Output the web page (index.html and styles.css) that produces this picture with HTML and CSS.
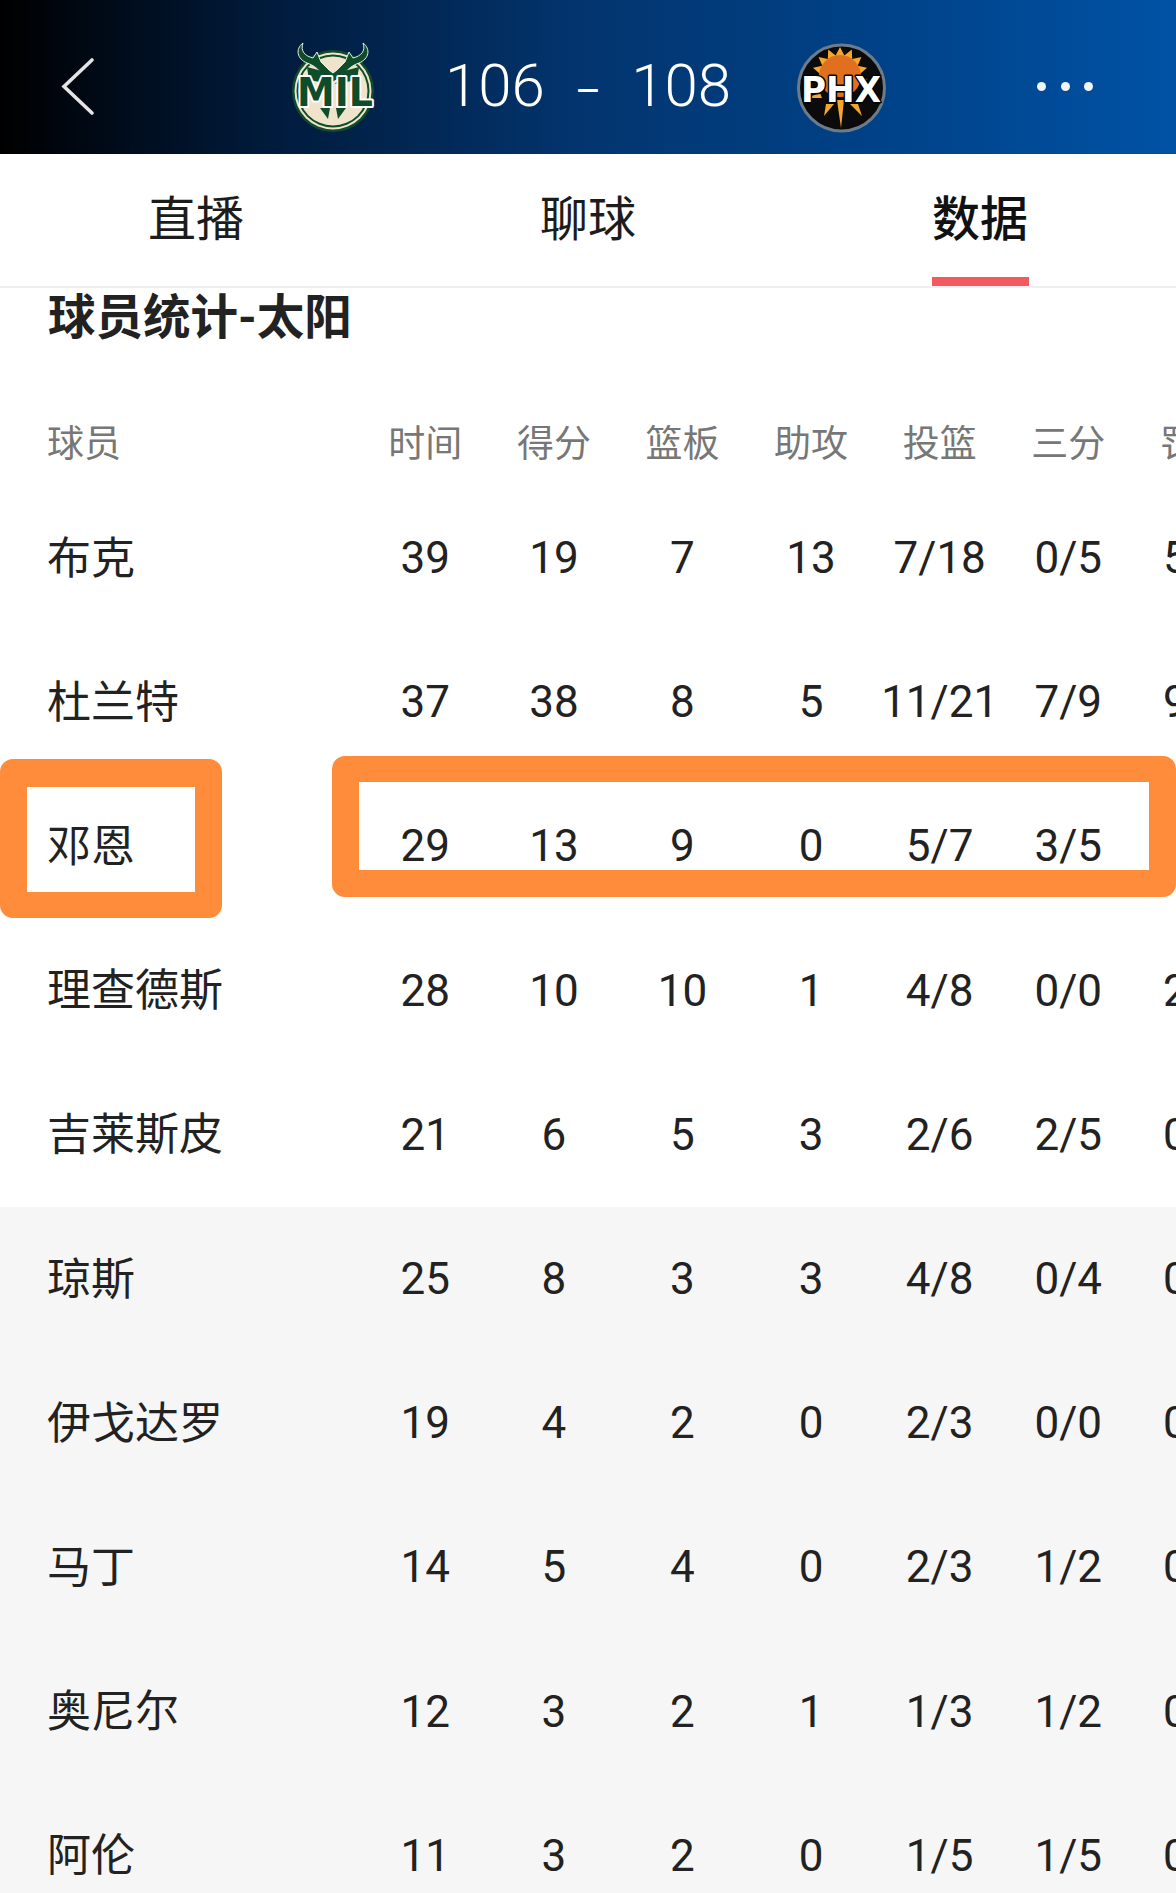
FILE: index.html
```html
<!DOCTYPE html>
<html lang="zh-CN">
<head>
<meta charset="utf-8">
<title>球员统计</title>
<link rel="stylesheet" href="styles.css">
</head>
<body>
<div class="stage">
  <header class="scorebar">
    <svg class="back" viewBox="0 0 40 64" aria-hidden="true"><path d="M32 6 L4 32.5 L32 59" fill="none" stroke="#e4e4e4" stroke-width="3.6" stroke-linecap="round" stroke-linejoin="miter"/></svg>
    <svg class="logo" viewBox="0 0 90 96" aria-hidden="true">
      <circle cx="44" cy="51" r="41" fill="#0f4d2a"/>
      <circle cx="44" cy="51" r="38.5" fill="#efe3cb"/>
      <circle cx="44" cy="51" r="36.5" fill="#0f4d2a"/>
      <circle cx="44" cy="51" r="34.5" fill="#efe3cb"/>
      <path d="M14 3 C6 9 8 19 18 23 C24 25 30 29 34 36 L44 42 L54 36 C58 29 64 25 70 23 C80 19 82 9 74 3 C77 11 72 16 64 18 L60 12 L56 22 L48 30 L44 33 L40 30 L32 22 L28 12 L24 18 C16 16 11 11 14 3 Z" fill="#0f4d2a" stroke="#e6efe4" stroke-width="1"/>
      <path d="M18 27 L33 31 L42 44 L20 40 Z M70 27 L55 31 L46 44 L68 40 Z" fill="#0f4d2a"/>
      <path d="M31 68 L41 68 L39 79 Z M47 68 L57 68 L49 79 Z" fill="#0f4d2a"/>
      <text class="logo-text mil" x="46" y="66" text-anchor="middle" textLength="76" lengthAdjust="spacingAndGlyphs">MIL</text>
    </svg>
    <div class="score"><span>106</span><span class="dash">–</span><span>108</span></div>
    <svg class="logo" viewBox="0 0 96 96" aria-hidden="true">
      <circle cx="47.5" cy="48" r="43" fill="#0b0b0b" stroke="#6d7b8a" stroke-width="3"/>
      <polygon points="18.4,39.9 26,34.1 19,27.8 28.3,25.8 24.6,17 33.8,19.1 34.2,9.6 41.7,15.5 46,7 50.3,15.5 57.8,9.6 58.2,19.1 67.4,17 63.7,25.8 73,27.8 66,34.1 73.6,39.9 46,48" fill="#f5a62b"/>
      <circle cx="46" cy="36" r="21" fill="#e0701f"/>
      <path d="M43 60 H50 L47 88 Z M32 64 H40 L30 76 Z M56 64 H64 L68 76 Z M12 58 L26 53 L28 58 L20 58 Z" fill="#f5a62b"/>
      <text class="logo-text phx" x="47" y="62" text-anchor="middle" textLength="80" lengthAdjust="spacingAndGlyphs">PHX</text>
    </svg>
    <div class="more"><i></i><i></i><i></i></div>
  </header>

  <nav class="tabs">
    <a class="tab">直播</a>
    <a class="tab">聊球</a>
    <a class="tab active">数据</a>
  </nav>

  <h2 class="title">球员统计-太阳</h2>

  <div class="row head"><span class="name">球员</span><span>时间</span><span>得分</span><span>篮板</span><span>助攻</span><span>投篮</span><span>三分</span><span>罚球</span></div>

  <div class="group">
    <div class="row"><span class="name">布克</span><span>39</span><span>19</span><span>7</span><span>13</span><span>7/18</span><span>0/5</span><span>5/5</span></div>
    <div class="row"><span class="name">杜兰特</span><span>37</span><span>38</span><span>8</span><span>5</span><span>11/21</span><span>7/9</span><span>9/9</span></div>
    <div class="row"><span class="name">邓恩</span><span>29</span><span>13</span><span>9</span><span>0</span><span>5/7</span><span>3/5</span><span>0/0</span></div>
    <div class="row"><span class="name">理查德斯</span><span>28</span><span>10</span><span>10</span><span>1</span><span>4/8</span><span>0/0</span><span>2/2</span></div>
    <div class="row"><span class="name">吉莱斯皮</span><span>21</span><span>6</span><span>5</span><span>3</span><span>2/6</span><span>2/5</span><span>0/0</span></div>
  </div>
  <div class="group bench">
    <div class="row"><span class="name">琼斯</span><span>25</span><span>8</span><span>3</span><span>3</span><span>4/8</span><span>0/4</span><span>0/0</span></div>
    <div class="row"><span class="name">伊戈达罗</span><span>19</span><span>4</span><span>2</span><span>0</span><span>2/3</span><span>0/0</span><span>0/0</span></div>
    <div class="row"><span class="name">马丁</span><span>14</span><span>5</span><span>4</span><span>0</span><span>2/3</span><span>1/2</span><span>0/0</span></div>
    <div class="row"><span class="name">奥尼尔</span><span>12</span><span>3</span><span>2</span><span>1</span><span>1/3</span><span>1/2</span><span>0/0</span></div>
    <div class="row"><span class="name">阿伦</span><span>11</span><span>3</span><span>2</span><span>0</span><span>1/5</span><span>1/5</span><span>0/0</span></div>
  </div>

  <div class="mark mark-name"></div>
  <div class="mark mark-stats"></div>
</div>
</body>
</html>
```

FILE: styles.css
```css
* { box-sizing: border-box; }
html, body { margin: 0; padding: 0; background: #fff; }
body { font-family: Roboto, "Noto Sans CJK SC", sans-serif; color: #222; }

.stage { position: relative; width: 1176px; height: 1893px; overflow: hidden; background: #fff; }

.scorebar {
  height: 154px;
  display: grid;
  grid-template-columns: 289px 90px 415px 96px 1fr;
  align-items: center;
  background: linear-gradient(90deg, #000 0%, #001a3a 22%, #03356f 50%, #004288 75%, #0052a5 100%);
}
.back { width: 40px; height: 64px; margin-left: 60px; margin-top: 17px; }
.logo { width: 100%; display: block; margin-top: 22px; }
.logo-text { font-family: "DejaVu Sans", sans-serif; font-weight: 700; paint-order: stroke; stroke-linejoin: round; }
.mil { font-size: 39px; fill: #0f4d2a; stroke: #fff; stroke-width: 4px; }
.phx { font-size: 36px; fill: #fff; stroke: #000; stroke-width: 3px; }

.score {
  display: flex;
  justify-content: center;
  align-items: center;
  gap: 30px;
  padding-left: 3px;
  margin-top: 18px;
  color: #fff;
  font-size: 60px;
  font-weight: 300;
  line-height: 70px;
}
.dash { font-size: 40px; font-weight: 400; padding-top: 12px; }

.more { display: flex; gap: 14.5px; margin-left: 147px; margin-top: 19px; }
.more i { width: 9px; height: 9px; border-radius: 50%; background: #f1f4f8; }

.tabs {
  height: 134px;
  display: grid;
  grid-template-columns: repeat(3, 1fr);
  border-bottom: 2px solid #f0f0f0;
}
.tab {
  position: relative;
  display: flex;
  justify-content: center;
  align-items: center;
  padding-bottom: 11px;
  font-size: 48px;
  color: #1c1c1c;
}
.tab.active { font-weight: 500; color: #111; }
.tab.active::after {
  content: "";
  position: absolute;
  left: 50%;
  bottom: 0;
  width: 97px;
  height: 9px;
  margin-left: -48px;
  background: #f25a5f;
}

.title {
  margin: 0 0 54px;
  padding-left: 48px;
  height: 60px;
  font-size: 47.5px;
  line-height: 60px;
  font-weight: 700;
  color: #222;
}

.row {
  width: 1260px;
  height: 144.2px;
  padding-left: 47px;
  display: grid;
  grid-template-columns: 314px repeat(7, 128.6px);
  align-items: center;
  font-size: 44px;
  text-align: center;
  white-space: nowrap;
}
.row .name { text-align: left; font-size: 44px; padding-bottom: 7px; }
.head { height: 84px; font-size: 37px; color: #777; padding-bottom: 7px; }
.head .name { font-size: 37px; padding-bottom: 0; }
.bench { background: #f6f6f6; }

.mark { position: absolute; border: 27px solid #ff8c3a; border-radius: 13px; }
.mark-name { left: 0; top: 759px; width: 222px; height: 159px; border-width: 28px 27px 26px; }
.mark-stats { left: 332px; top: 756px; width: 844px; height: 141px; border-width: 26px 27px 27px; }
```
